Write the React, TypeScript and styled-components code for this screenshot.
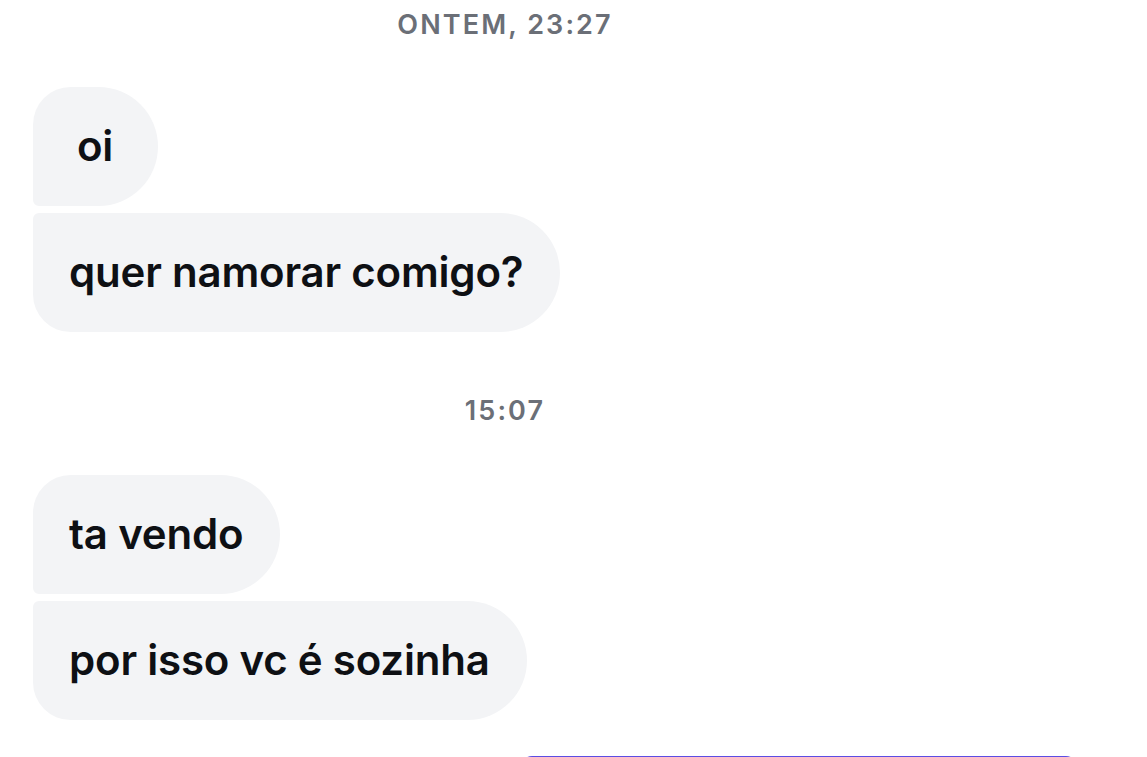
import React from "react";
import styled, { createGlobalStyle } from "styled-components";

const Global = createGlobalStyle`
  html, body { margin: 0; padding: 0; background: #ffffff; overflow: hidden; }
  body { font-family: Inter, "Noto Sans", "Liberation Sans", sans-serif; -webkit-font-smoothing: antialiased; }
`;

const Chat = styled.div`
  display: flex;
  flex-direction: column;
  width: 1147px;
  box-sizing: border-box;
  padding: 0 69px 0 33px;
`;

const Stamp = styled.div<{ $top: number; $bottom: number }>`
  align-self: center;
  margin: ${(p) => p.$top}px 101px ${(p) => p.$bottom}px 0;
  font-size: 27px;
  line-height: 32px;
  font-weight: 600;
  letter-spacing: 2.1px;
  color: #6b6f77;
  text-transform: uppercase;
`;

const Group = styled.div<{ $out?: boolean }>`
  display: flex;
  flex-direction: column;
  align-items: ${(p) => (p.$out ? "flex-end" : "flex-start")};
  gap: 7px;
`;

type Pos = "first" | "last" | "single";

const radius = (pos: Pos) => {
  if (pos === "first") return "38px 60px 60px 6px";
  if (pos === "last") return "6px 60px 60px 38px";
  return "12px";
};

const Bubble = styled.div<{ $pos: Pos; $out?: boolean }>`
  box-sizing: border-box;
  height: 119px;
  min-width: 125px;
  padding: 0 37px 2px 36px;
  display: flex;
  align-items: center;
  justify-content: center;
  border-radius: ${(p) => radius(p.$pos)};
  background: ${(p) => (p.$out ? "#5b4de3" : "#f3f4f6")};
  color: ${(p) => (p.$out ? "#ffffff" : "#0e1014")};
  font-size: 42px;
  font-weight: 600;
  letter-spacing: -0.2px;
  white-space: nowrap;
`;

const SentBubble = styled(Bubble)`
  width: 558px;
  margin-top: 36px;
`;

export default function App() {
  return (
    <>
      <Global />
      <Chat>
        <Stamp $top={9} $bottom={46}>Ontem, 23:27</Stamp>
        <Group>
          <Bubble $pos="first">oi</Bubble>
          <Bubble $pos="last">quer namorar comigo?</Bubble>
        </Group>
        <Stamp $top={63} $bottom={48}>15:07</Stamp>
        <Group>
          <Bubble $pos="first">ta vendo</Bubble>
          <Bubble $pos="last">por isso vc é sozinha</Bubble>
        </Group>
        <Group $out>
          <SentBubble $pos="single" $out>&nbsp;</SentBubble>
        </Group>
      </Chat>
    </>
  );
}
